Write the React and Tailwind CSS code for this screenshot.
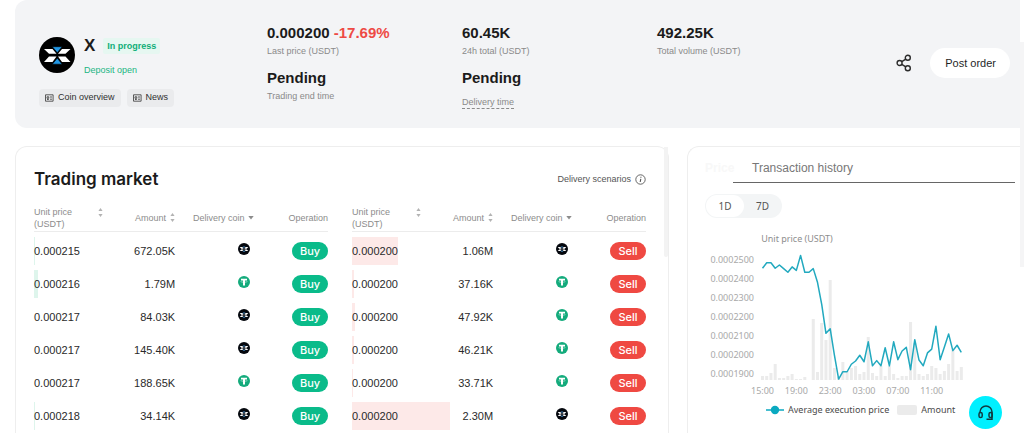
import { useState } from "react";

const buyOrders = [
  { price: "0.000215", amount: "672.05K", coin: "X", depth: 1 },
  { price: "0.000216", amount: "1.79M", coin: "USDT", depth: 4 },
  { price: "0.000217", amount: "84.03K", coin: "X", depth: 0 },
  { price: "0.000217", amount: "145.40K", coin: "X", depth: 0 },
  { price: "0.000217", amount: "188.65K", coin: "USDT", depth: 0 },
  { price: "0.000218", amount: "34.14K", coin: "X", depth: 1 },
];

const sellOrders = [
  { price: "0.000200", amount: "1.06M", coin: "X", depth: 46 },
  { price: "0.000200", amount: "37.16K", coin: "USDT", depth: 2 },
  { price: "0.000200", amount: "47.92K", coin: "USDT", depth: 3 },
  { price: "0.000200", amount: "46.21K", coin: "USDT", depth: 2 },
  { price: "0.000200", amount: "33.71K", coin: "USDT", depth: 1 },
  { price: "0.000200", amount: "2.30M", coin: "X", depth: 98 },
];

// average price per half hour, in 0.00001 USDT
const prices = [
  24.57, 24.86, 24.86, 24.57, 24.74, 24.55, 24.36, 24.64, 24.46, 25.24, 24.36,
  24.36, 24.55, 23.84, 22.69, 21.18, 21.42, 20.05, 18.8, 19.18, 19.18, 19.57,
  19.74, 20.04, 19.7, 20.74, 19.49, 19.76, 19.49, 20.43, 19.49, 20.74, 19.81,
  20.26, 20.45, 19.29, 20.85, 19.79, 19.49, 20.16, 20.36, 21.55, 19.81, 20.47,
  21.15, 20.28, 20.56, 20.19,
];

const volumes = [
  4, 4, 7, 16, 2, 2, 4, 6, 1, 1, 3, 0, 61, 8, 57, 40, 100, 12, 3, 18, 9, 12,
  14, 6, 8, 43, 7, 4, 14, 4, 14, 6, 2, 4, 4, 58, 37, 6, 4, 6, 14, 12, 6, 9, 16,
  30, 9, 13,
];

const priceTicks = [
  "0.0002500",
  "0.0002400",
  "0.0002300",
  "0.0002200",
  "0.0002100",
  "0.0002000",
  "0.0001900",
];

const timeTicks = ["15:00", "19:00", "23:00", "03:00", "07:00", "11:00"];

const XCoin = ({ className }) => (
  <svg viewBox="0 0 36 36" className={className} aria-label="X">
    <circle cx="18" cy="18" r="18" fill="#000" />
    <path
      d="M5 12h8.500l4 4.800H10zM31.500 12H23l-4 4.800h7.500zM5 25h8.500l4-5.500H10zM31.500 25H23l-4-5.500h7.500z"
      fill="#fff"
    />
    <path
      d="M13.300 9.700h9.900L18.250 15.700zM13.300 27.200h9.900L18.250 21.200z"
      fill="#2196e3"
      stroke="#000"
      strokeWidth=".6"
    />
  </svg>
);

const SmallXCoin = () => (
  <svg viewBox="0 0 12 12" className="size-3" aria-label="X">
    <circle cx="6" cy="6" r="6" fill="#05080e" />
    <path
      d="M1.800 4h2.600L5.600 5.700H3.200zM10.200 4H7.600L6.400 5.700h2.400zM1.800 8.100h2.600l1.200-1.700H3.200zM10.200 8.100H7.600L6.400 6.400h2.400z"
      fill="#fff"
    />
    <path d="M4.600 3.400h2.800L6 5.200zM4.600 8.700h2.800L6 6.900z" fill="#3c7fb5" />
  </svg>
);

const TetherCoin = () => (
  <svg viewBox="0 0 12 12" className="size-3" aria-label="USDT">
    <circle cx="6" cy="6" r="6" fill="#14ab7c" />
    <path d="M3 2.800h6v1.700H7v4.900H5V4.500H3z" fill="#fff" />
    <path d="M2.600 5.600c1.500.9 5.300.9 6.800 0" stroke="#fff" strokeWidth=".5" fill="none" />
  </svg>
);

const SortIcon = () => (
  <svg viewBox="0 0 5 9" className="h-[9px] w-[5px] shrink-0" fill="#b3b3b3">
    <path d="M2.500 0L4.600 3H.4zM2.500 9L.4 6h4.200z" />
  </svg>
);

const NoteIcon = () => (
  <svg viewBox="0 0 9 8" className="h-2 w-[9px]" fill="none" stroke="#4a4a4a" strokeWidth=".9">
    <path d="M.5.8h7.600v6.400H.5zM2 2.800h1.800v1.500H2zM5 3h2M2 5.500h1.800M5 5.200h2" />
  </svg>
);

const ShareIcon = () => (
  <svg viewBox="0 0 16 18" className="h-[18px] w-4" fill="none" stroke="#2b2b2b" strokeWidth="1.400">
    <circle cx="3.600" cy="9" r="2.500" />
    <circle cx="11.800" cy="3.800" r="2.500" />
    <circle cx="11.800" cy="14.200" r="2.500" />
    <path d="M5.800 7.700l4-2.600M5.800 10.300l4 2.600" />
  </svg>
);

const Stat = ({ value, change, label, dashed }) => (
  <div className="h-[45px]">
    <div className="text-[15px] leading-5 font-bold whitespace-nowrap text-[#1b1b1b]">
      {value} {change && <span className="text-[#ee4a45]">{change}</span>}
    </div>
    <div
      className={
        dashed
          ? "inline-block border-b border-dashed border-[#8a8a8a] text-[9px] leading-3 text-[#8a8a8a]"
          : "mt-0.5 text-[9px] leading-3 text-[#8a8a8a]"
      }
    >
      {label}
    </div>
  </div>
);

const CoinHeader = () => (
  <header className="flex h-32 shrink-0 rounded-l-xl bg-[#f3f4f6] pt-[23px] pr-[10px] pl-6">
    <div className="w-[228px] shrink-0 pt-3">
      <div className="flex gap-[9px]">
        <XCoin className="mt-0.5 size-9" />
        <div>
          <div className="flex h-[22px] items-center gap-2">
            <h1 className="text-[17px] leading-[22px] font-bold text-[#1b1b1b]">X</h1>
            <span className="rounded-xs bg-[#e6f7f1] px-1 text-[9px] leading-4 font-bold text-[#0fae78]">
              In progress
            </span>
          </div>
          <div className="mt-[7px] text-[9px] leading-3 text-[#22b583]">Deposit open</div>
        </div>
      </div>
      <div className="mt-[13px] flex gap-1.5">
        <button className="flex h-[18px] items-center gap-1 rounded-sm bg-[#eaebed] px-1.5 text-[9px] text-[#2f2f2f]">
          <NoteIcon />
          Coin overview
        </button>
        <button className="flex h-[18px] items-center gap-1 rounded-sm bg-[#eaebed] px-1.5 text-[9px] text-[#2f2f2f]">
          <NoteIcon />
          News
        </button>
      </div>
    </div>
    <div className="grid w-[585px] grid-cols-3 content-start">
      <Stat value="0.000200" change="-17.69%" label="Last price (USDT)" />
      <Stat value="60.45K" label="24h total (USDT)" />
      <Stat value="492.25K" label="Total volume (USDT)" />
      <Stat value="Pending" label="Trading end time" />
      <Stat value="Pending" label="Delivery time" dashed />
    </div>
    <div className="mt-[25px] ml-auto flex h-[30px] shrink-0 items-center gap-[18px]">
      <button aria-label="Share">
        <ShareIcon />
      </button>
      <button className="h-[30px] rounded-full bg-white px-[14px] pl-[15px] text-[11px] text-[#1f1f1f]">
        Post order
      </button>
    </div>
  </header>
);

const OrderTable = ({ orders, side }) => (
  <table className="w-full table-fixed border-collapse">
    <thead>
      <tr className="h-[26px] border-b border-[#ececec] text-[9px] leading-3 text-[#8c8c8c]">
        <th className="w-[24%] p-0 text-left font-normal">
          <span className="flex items-start justify-between pr-0.5">
            <span>
              Unit price
              <br />
              (USDT)
            </span>
            <span className="pt-0.5">
              <SortIcon />
            </span>
          </span>
        </th>
        <th className="w-[24%] p-0 font-normal">
          <span className="flex items-center justify-end gap-1">
            Amount
            <SortIcon />
          </span>
        </th>
        <th className="w-[27%] p-0 font-normal whitespace-nowrap">
          <span className="flex items-center justify-end gap-1">
            Delivery coin
            <svg viewBox="0 0 6 4" className="h-1 w-1.5" fill="#8c8c8c">
              <path d="M.3 0h5.400L3 3.600z" />
            </svg>
          </span>
        </th>
        <th className="w-[25%] p-0 text-right font-normal">Operation</th>
      </tr>
    </thead>
    <tbody className="before:block before:h-[3px]">
      {orders.map((order, i) => (
        <tr key={i} className="h-[33px] text-[11px] text-[#2a2a2a]">
          <td className="relative p-0">
            <span
              className={
                side === "buy"
                  ? "absolute top-0.5 left-0 h-7 bg-[#def5ec]"
                  : "absolute top-0.5 left-0 h-7 bg-[#fde9e8]"
              }
              style={{ width: order.depth }}
            />
            <span className="relative">{order.price}</span>
          </td>
          <td className="p-0 text-right">{order.amount}</td>
          <td className="p-0 pr-1">
            <span className="flex justify-end pb-1">
              {order.coin === "X" ? <SmallXCoin /> : <TetherCoin />}
            </span>
          </td>
          <td className="p-0">
            <button
              className={
                side === "buy"
                  ? "ml-auto block h-[18px] w-9 rounded-full bg-[#0abb8a] font-[Inter,sans-serif] text-[11px] leading-[18px] font-medium text-white"
                  : "ml-auto block h-[18px] w-9 rounded-full bg-[#ef4942] font-[Inter,sans-serif] text-[11px] leading-[18px] font-medium text-white"
              }
            >
              {side === "buy" ? "Buy" : "Sell"}
            </button>
          </td>
        </tr>
      ))}
    </tbody>
  </table>
);

const TradingMarket = () => (
  <section className="flex w-[654px] shrink-0 rounded-t-xl border border-b-0 border-[#eeeeee]">
    <div className="flex-1 pt-[18px] pr-[18px] pl-[18px]">
      <div className="flex items-center justify-between">
        <h2 className="font-[Inter,sans-serif] text-[17px] leading-7 font-semibold text-[#1b1b1b]">
          Trading market
        </h2>
        <button className="flex items-center gap-1 text-[9px] leading-3 text-[#555555]">
          Delivery scenarios
          <svg viewBox="0 0 11 11" className="size-[11px]" fill="none" stroke="#555555">
            <circle cx="5.500" cy="5.500" r="4.700" strokeWidth=".9" />
            <path d="M5.800 4.800L5.200 8M5.900 2.800v1" strokeWidth="1.100" />
          </svg>
        </button>
      </div>
      <div className="mt-3 grid grid-cols-2 gap-6">
        <OrderTable orders={buyOrders} side="buy" />
        <OrderTable orders={sellOrders} side="sell" />
      </div>
    </div>
    <div className="h-[110px] w-1 rounded-b-full bg-[#f3f3f3]" />
  </section>
);

const PriceChart = () => {
  const x = (i) => 57.5 + i * 4.23;
  const y = (price) => 30 + (25 - price) * 19.2;

  return (
    <svg
      viewBox="0 0 300 170"
      className="block h-[170px] w-[300px] font-['Noto_Sans',sans-serif] text-[9px]"
    >
      <text x="92" y="12" textAnchor="middle" fill="#8e8e8e">
        Unit price (USDT)
      </text>
      {priceTicks.map((tick, i) => (
        <text key={tick} x="49" y={33 + i * 19} textAnchor="end" fill="#a9a9a9">
          {tick}
        </text>
      ))}
      {timeTicks.map((tick, i) => (
        <text key={tick} x={x(i * 8)} y="164" textAnchor="middle" fill="#a9a9a9">
          {tick}
        </text>
      ))}
      {volumes.map((v, i) => (
        <rect key={i} x={x(i) - 1.5} y={150 - v} width="3" height={v} fill="#ebebeb" />
      ))}
      <polyline
        points={prices.map((p, i) => `${x(i)},${y(p)}`).join(" ")}
        fill="none"
        stroke="#22a9bf"
        strokeWidth="1.500"
        strokeLinejoin="round"
      />
    </svg>
  );
};

const PricePanel = () => {
  const [range, setRange] = useState("1D");

  return (
    <section className="min-w-0 flex-1 rounded-tl-xl border-t border-l border-[#eeeeee] pl-[17px]">
      <div className="mr-[5px] flex h-9 text-xs leading-5">
        <button className="w-7 pt-1.5 font-bold text-[#f8f8f8]">Price</button>
        <div className="flex-1 border-b border-[#666666] pt-[11px] pl-[19px]">
          <button className="block text-[#777777]">Transaction history</button>
        </div>
      </div>
      <div className="mt-[11px] flex h-6 w-[77px] rounded-full bg-[#f3f5f6] p-px font-['Noto_Sans',sans-serif] text-[10px] text-[#555555]">
        {["1D", "7D"].map((r) => (
          <button
            key={r}
            onClick={() => setRange(r)}
            className={range === r ? "w-[38px] rounded-full bg-white" : "w-[37px]"}
          >
            {r}
          </button>
        ))}
      </div>
      <div className="mt-3">
        <PriceChart />
      </div>
      <div className="mt-1 flex items-center pl-[61px] font-['Noto_Sans',sans-serif] text-[9px] leading-3 whitespace-nowrap text-[#4a4a4a]">
        <svg viewBox="0 0 18 10" className="h-2.5 w-[18px]">
          <path d="M0 5h18" stroke="#0aa9c0" strokeWidth="1.500" />
          <circle cx="9" cy="5" r="4.200" fill="#0aa9c0" />
        </svg>
        <span className="ml-1">Average execution price</span>
        <span className="ml-2 h-2.5 w-5 rounded-xs bg-[#ebebeb]" />
        <span className="ml-1">Amount</span>
      </div>
    </section>
  );
};

export default function App() {
  return (
    <div className="flex h-screen overflow-hidden bg-white font-['Liberation_Sans',Arial,sans-serif]">
      <main className="flex min-w-0 flex-1 flex-col overflow-hidden pl-[15px]">
        <CoinHeader />
        <div className="mt-[18px] flex flex-1 gap-[18px]">
          <TradingMarket />
          <PricePanel />
        </div>
      </main>
      <div className="w-1 pt-[42px]">
        <div className="h-[225px] bg-[#f5f5f6]" />
      </div>
      <button
        aria-label="Customer support"
        className="fixed right-[22px] bottom-1 flex size-[33px] items-center justify-center rounded-full bg-[#00f0ff]"
      >
        <svg viewBox="0 0 16 16" className="size-4" fill="none" stroke="#123a40" strokeWidth="1.500">
          <path d="M2 8V7a6 6 0 0 1 12 0v7.200H8.500" />
          <rect x="1" y="7.500" width="3.200" height="5" rx="1.600" />
          <rect x="11" y="7.500" width="3.200" height="5" rx="1.600" />
        </svg>
      </button>
    </div>
  );
}
